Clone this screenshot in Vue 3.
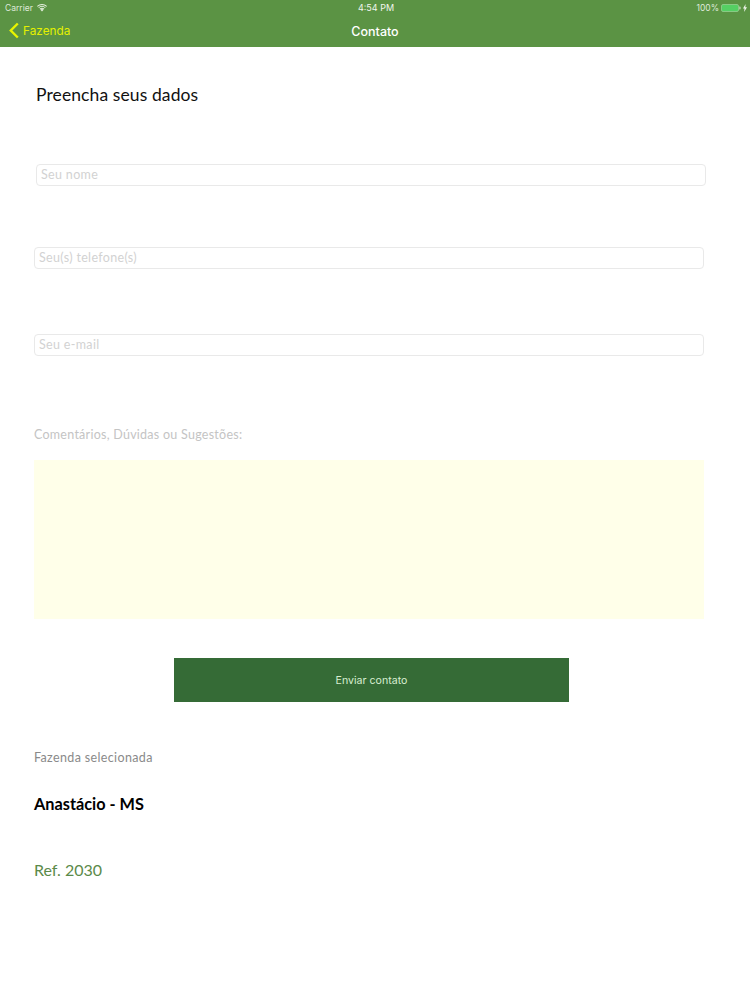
<script setup>
const fields = [
  { label: 'Seu nome', cls: 'first' },
  { label: 'Seu(s) telefone(s)', cls: 'second' },
  { label: 'Seu e-mail', cls: 'third' }
]
</script>

<template>
  <div class="page">
    <header class="bar">
      <div class="status">
        <div class="status-left">
          <span>Carrier</span>
          <svg class="wifi" width="10" height="8" viewBox="0 0 10 8" aria-hidden="true">
            <path d="M5 7.6 3.4 5.7a2.5 2.5 0 0 1 3.2 0Z" fill="#e6f0e0"/>
            <path d="M2.6 4.8a3.8 3.8 0 0 1 4.8 0l-.6.7a2.8 2.8 0 0 0-3.6 0Z" fill="#e6f0e0"/>
            <path d="M1.3 3.4a5.7 5.7 0 0 1 7.4 0l-.6.7a4.7 4.7 0 0 0-6.2 0Z" fill="#e6f0e0"/>
            <path d="M0 2a7.6 7.6 0 0 1 10 0l-.6.7a6.6 6.6 0 0 0-8.8 0Z" fill="#e6f0e0"/>
          </svg>
        </div>
        <span class="clock">4:54 PM</span>
        <div class="status-right">
          <span>100%</span>
          <svg width="20" height="8" viewBox="0 0 20 8" aria-hidden="true">
            <rect x="0.5" y="0.5" width="17" height="7" rx="1.5" fill="#55cf63" stroke="#a9dca6" stroke-width="0.6"/>
            <path d="M18.4 2.6h.5a.6.6 0 0 1 .6.6v1.6a.6.6 0 0 1-.6.6h-.5Z" fill="#dbe9d5"/>
          </svg>
          <svg width="4" height="8" viewBox="0 0 4 8" aria-hidden="true">
            <path d="M2.6 0 0 4.5h1.5L1.1 8 4 3.3H2.3Z" fill="#eef5ea"/>
          </svg>
        </div>
      </div>
      <nav class="nav">
        <a class="back">
          <svg width="12" height="17" viewBox="0 0 12 17" aria-hidden="true">
            <path d="M9.8 1.5 2.8 8.5l7 7" fill="none" stroke="#e8f500" stroke-width="2.4"/>
          </svg>
          <span>Fazenda</span>
        </a>
        <h1 class="title">Contato</h1>
      </nav>
    </header>

    <main class="content">
      <h2 class="heading">Preencha seus dados</h2>

      <div v-for="f in fields" :key="f.label" class="input" :class="f.cls">{{ f.label }}</div>

      <p class="comment-label">Comentários, Dúvidas ou Sugestões:</p>
      <div class="textarea"></div>

      <div class="send">Enviar contato</div>

      <p class="selected-label">Fazenda selecionada</p>
      <p class="farm">Anastácio - MS</p>
      <p class="ref">Ref. 2030</p>
    </main>
  </div>
</template>

<style>
html, body { margin: 0; background: #fff; }
</style>

<style scoped>
.page {
  width: 750px;
  height: 1000px;
  overflow: hidden;
  background: #fff;
  font-family: Lato, "Open Sans", sans-serif;
}
.bar {
  height: 47px;
  background: #5b9344;
  color: #fff;
  font-family: Inter, Roboto, sans-serif;
}
.status {
  height: 15px;
  padding: 0 3px 0 5px;
  display: grid;
  grid-template-columns: 1fr auto 1fr;
  align-items: center;
  font-size: 8.5px;
  color: #dfeada;
}
.status-left { display: flex; align-items: center; gap: 4px; }
.clock { color: #f1f6ee; font-size: 9px; }
.status-right { display: flex; align-items: center; justify-content: flex-end; gap: 2px; }
.nav {
  height: 32px;
  position: relative;
  display: flex;
  align-items: center;
  justify-content: center;
}
.back {
  position: absolute;
  left: 8px;
  top: 7px;
  display: flex;
  align-items: center;
  gap: 3px;
  font-size: 11.8px;
  color: #e4f000;
}
.title {
  margin: 0;
  font-size: 12.5px;
  font-weight: 500;
  color: #fff;
}
.content {
  padding: 0 46px 0 34px;
}
.heading {
  margin: 37px 0 0 2px;
  font-size: 17.5px;
  line-height: 22px;
  font-weight: 400;
  color: #111;
  letter-spacing: 0.1px;
}
.input {
  box-sizing: border-box;
  width: 670px;
  height: 22px;
  padding-left: 4px;
  border: 1px solid #e9e9e9;
  border-radius: 4px;
  font-size: 12.5px;
  line-height: 20px;
  color: #d2d2d2;
  letter-spacing: 0.33px;
}
.first { margin: 58px 0 0 2px; }
.second { margin-top: 61px; }
.third { margin-top: 65px; }
.comment-label {
  margin: 70px 0 0;
  font-size: 12.5px;
  line-height: 18px;
  color: #c4c4c4;
  letter-spacing: 0.26px;
}
.textarea {
  width: 670px;
  height: 159px;
  margin-top: 16px;
  background: #ffffe9;
}
.send {
  width: 395px;
  height: 44px;
  margin: 39px 0 0 140px;
  background: #356b36;
  color: #d8eed0;
  font-size: 10.6px;
  line-height: 45px;
  text-align: center;
  font-family: Inter, Roboto, sans-serif;
}
.selected-label {
  margin: 47px 0 0;
  font-size: 12.5px;
  line-height: 18px;
  color: #8a8a8a;
  letter-spacing: 0.36px;
}
.farm {
  margin: 26px 0 0;
  font-size: 16.3px;
  line-height: 22px;
  font-weight: 700;
  color: #000;
}
.ref {
  margin: 44px 0 0;
  font-size: 16px;
  line-height: 22px;
  color: #5b8a4a;
  letter-spacing: 0;
}
</style>
